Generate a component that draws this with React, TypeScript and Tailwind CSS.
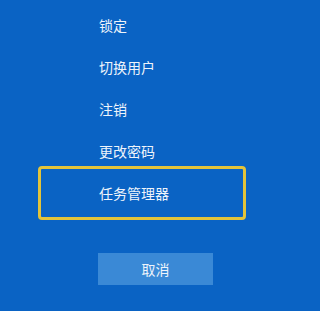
export default function App() {
  const items = ["锁定", "切换用户", "注销", "更改密码"];
  return (
    <div
      className="min-h-screen w-full bg-[#0a63c4] text-[#eef4fb]"
      style={{ fontFamily: '"Noto Sans CJK SC", "Noto Sans", sans-serif' }}
    >
      <div className="ml-[38px] flex w-[208px] flex-col pt-[15px]">
        <div className="flex flex-col gap-[22px]">
          {items.map((label) => (
            <div key={label} className="pl-[61px] text-[14px] leading-[20px]">
              {label}
            </div>
          ))}
        </div>
        <div className="mt-[5px] flex h-[54px] items-center rounded-[4px] border-[3px] border-[#e3c43a] pl-[58px] text-[14px] leading-[20px]">
          任务管理器
        </div>
        <button
          type="button"
          className="ml-[60px] mt-[33px] flex h-[32px] w-[115px] items-center justify-center bg-[#3a89d6] text-[14px] text-[#eef4fb]"
        >
          取消
        </button>
      </div>
    </div>
  );
}
